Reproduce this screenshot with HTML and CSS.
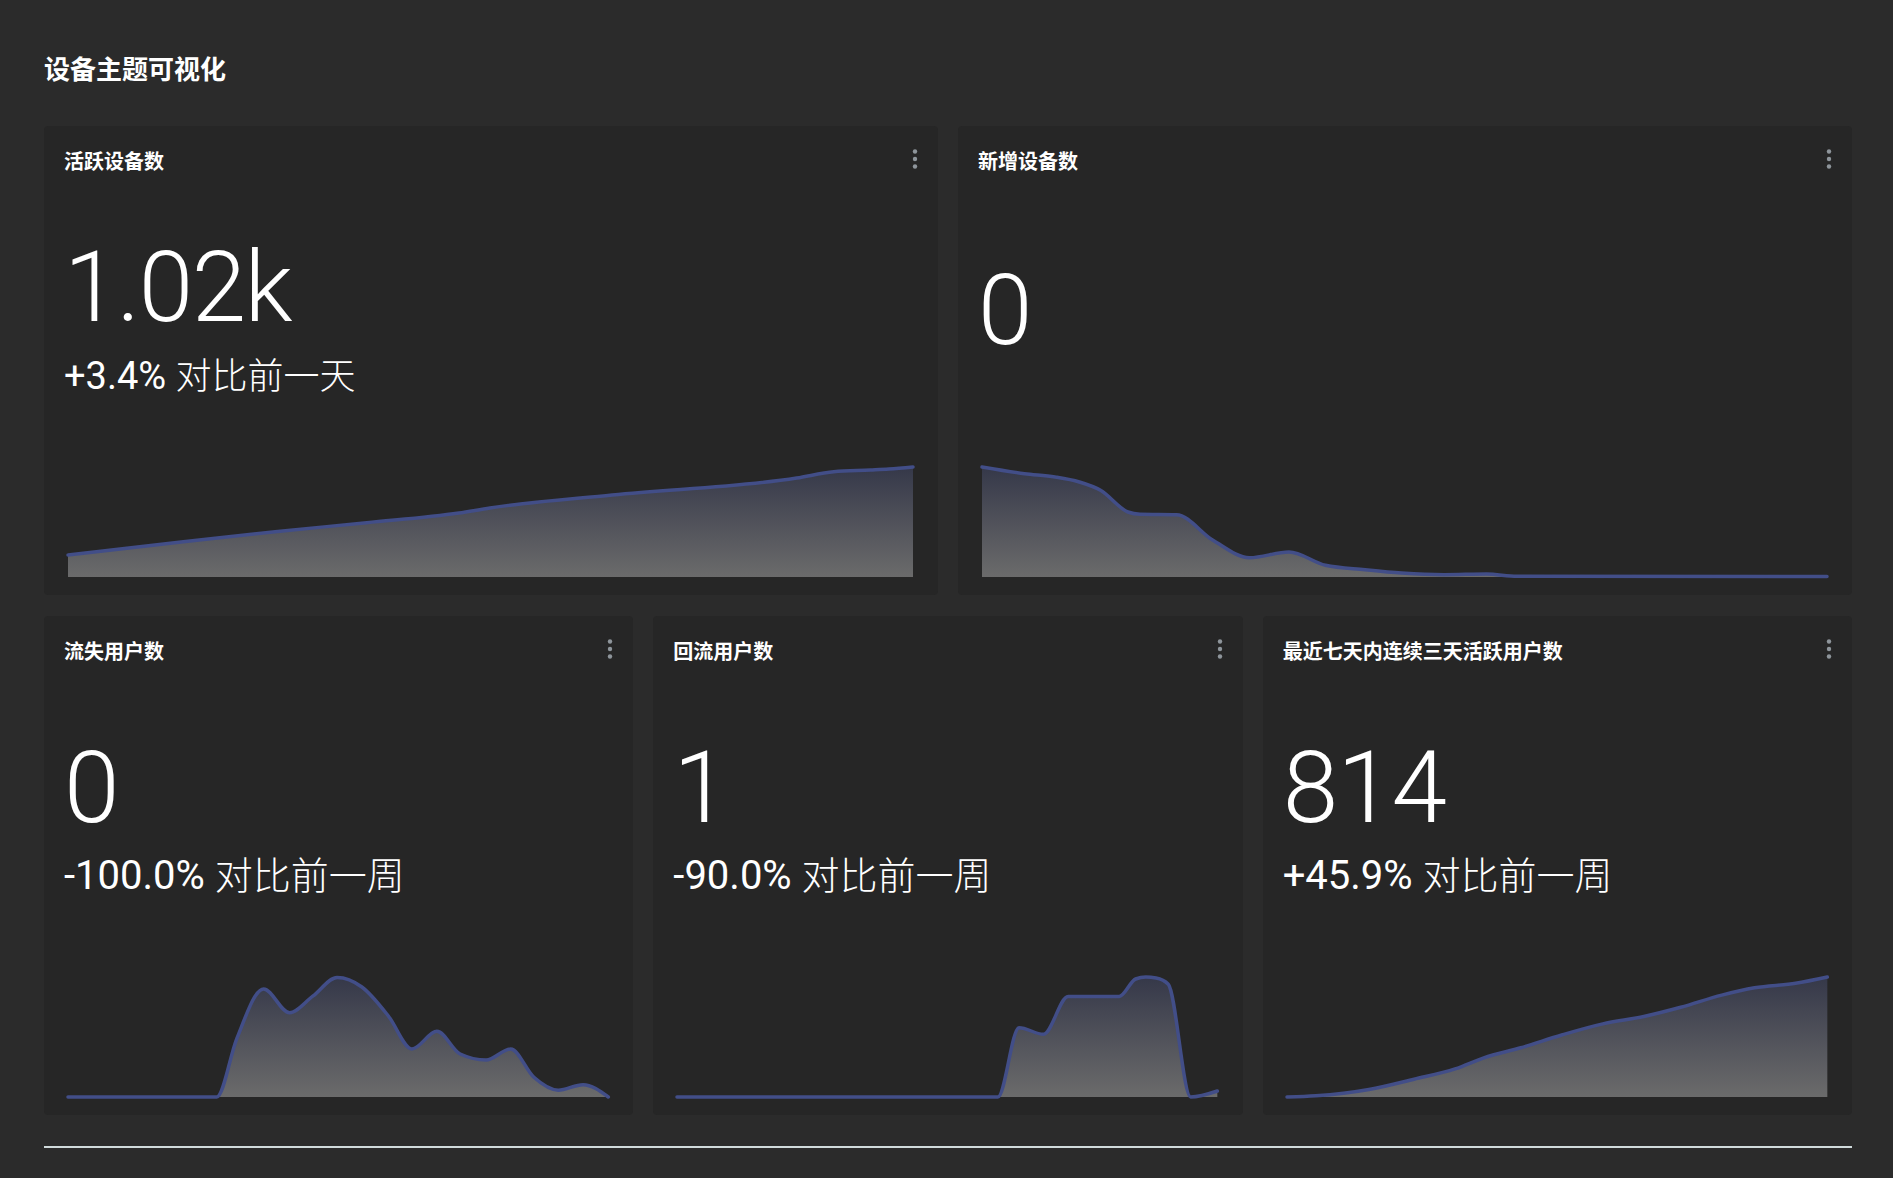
FILE: index.html
```html
<!DOCTYPE html>
<html lang="zh-CN">
<head>
<meta charset="utf-8">
<title>设备主题可视化</title>
<link rel="stylesheet" href="styles.css">
</head>
<body>
<main class="page">
  <h1 class="page-title">设备主题可视化</h1>
  <div class="dashboard">
    <section class="row row-top">
      <article class="card">
        <header class="card-head">
          <h2 class="card-title">活跃设备数</h2>
          <svg class="kebab" width="6" height="20" viewBox="0 0 6 20"><circle cx="3" cy="2.5" r="2.2"/><circle cx="3" cy="10" r="2.2"/><circle cx="3" cy="17.5" r="2.2"/></svg>
        </header>
        <div class="card-body">
          <div class="stat-value">1.02k</div>
          <div class="stat-delta">+3.4% <span class="delta-label">对比前一天</span></div>
        </div>
        <div class="spark-wrap spark-short">
          <svg class="spark" data-points="0,88 115,74.7 206.6,64.7 298,55.7 390,46 421,41 543,28 727,11 764,4.7 800.5,3 819,2 843,0"></svg>
        </div>
      </article>
      <article class="card">
        <header class="card-head">
          <h2 class="card-title">新增设备数</h2>
          <svg class="kebab" width="6" height="20" viewBox="0 0 6 20"><circle cx="3" cy="2.5" r="2.2"/><circle cx="3" cy="10" r="2.2"/><circle cx="3" cy="17.5" r="2.2"/></svg>
        </header>
        <div class="card-body">
          <div class="stat-value">0</div>
        </div>
        <div class="spark-wrap spark-short">
          <svg class="spark" data-points="0,0 42.6,6.7 73,10 97.3,15 118.5,23.3 145.9,45 158,47.3 194.5,47.7 231,73.3 267.5,90.7 307,85 343.5,98.3 383,102.7 419.5,106 462,107.7 504.6,107 535,109.3 845,109.5"></svg>
        </div>
      </article>
    </section>
    <section class="row row-bottom">
      <article class="card">
        <header class="card-head">
          <h2 class="card-title">流失用户数</h2>
          <svg class="kebab" width="6" height="20" viewBox="0 0 6 20"><circle cx="3" cy="2.5" r="2.2"/><circle cx="3" cy="10" r="2.2"/><circle cx="3" cy="17.5" r="2.2"/></svg>
        </header>
        <div class="card-body">
          <div class="stat-value">0</div>
          <div class="stat-delta">-100.0% <span class="delta-label">对比前一周</span></div>
        </div>
        <div class="spark-wrap spark-tall">
          <svg class="spark" data-points="0,120 148.6,120 168.7,61.6 195.5,11.9 221.4,35.8 244.6,19.2 269,0.5 293.7,10 320.5,39.5 343.7,72 368.7,54.3 391.9,77 417.8,83 442.4,72 465.6,100.3 490,113.2 514.7,107.7 540,120"></svg>
        </div>
      </article>
      <article class="card">
        <header class="card-head">
          <h2 class="card-title">回流用户数</h2>
          <svg class="kebab" width="6" height="20" viewBox="0 0 6 20"><circle cx="3" cy="2.5" r="2.2"/><circle cx="3" cy="10" r="2.2"/><circle cx="3" cy="17.5" r="2.2"/></svg>
        </header>
        <div class="card-body">
          <div class="stat-value">1</div>
          <div class="stat-delta">-90.0% <span class="delta-label">对比前一周</span></div>
        </div>
        <div class="spark-wrap spark-tall">
          <svg class="spark" data-points="0,120 320.4,120 341.6,50.7 366,57.3 390.6,19.4 441.6,19.4 458,2 468.2,0 478.4,1 490.6,7.2 513,120 539.6,114"></svg>
        </div>
      </article>
      <article class="card">
        <header class="card-head">
          <h2 class="card-title">最近七天内连续三天活跃用户数</h2>
          <svg class="kebab" width="6" height="20" viewBox="0 0 6 20"><circle cx="3" cy="2.5" r="2.2"/><circle cx="3" cy="10" r="2.2"/><circle cx="3" cy="17.5" r="2.2"/></svg>
        </header>
        <div class="card-body">
          <div class="stat-value">814</div>
          <div class="stat-delta">+45.9% <span class="delta-label">对比前一周</span></div>
        </div>
        <div class="spark-wrap spark-tall">
          <svg class="spark" data-points="0,120 28.7,118.8 81.9,112.5 127,102.2 168,91.9 196.7,80.8 233.6,70.8 274.6,58 315.6,46.9 356.6,39.5 393.5,30.3 434.5,18.1 467.3,10.8 508.3,6.3 540,0"></svg>
        </div>
      </article>
    </section>
    <hr class="divider">
  </div>
</main>
<script src="script.js"></script>
</body>
</html>
```

FILE: styles.css
```css
* {
  box-sizing: border-box;
}

html,
body {
  margin: 0;
  padding: 0;
}

body {
  background: #2b2b2b;
  color: #ffffff;
  font-family: Roboto, "Noto Sans CJK SC", sans-serif;
}

.page {
  padding: 50px 41px 0 44px;
  min-height: 1178px;
}

.page-title {
  margin: 0;
  font-family: "Noto Sans CJK SC", sans-serif;
  font-size: 26px;
  line-height: 36px;
  font-weight: 700;
}

.dashboard {
  margin-top: 40px;
  display: flex;
  flex-direction: column;
  gap: 21px;
}

.row {
  display: grid;
  gap: 20px;
}

.row-top {
  grid-template-columns: 1fr 1fr;
  height: 469px;
}

.row-bottom {
  grid-template-columns: 1fr 1fr 1fr;
  height: 499px;
}

.card {
  background: #262626;
  border-radius: 4px;
  padding: 21px 20px 18px;
  display: flex;
  flex-direction: column;
  min-width: 0;
}

.card-head {
  display: flex;
  justify-content: space-between;
  align-items: center;
  height: 28px;
}

.card-title {
  margin: 0;
  font-family: "Noto Sans CJK SC", sans-serif;
  font-size: 20px;
  line-height: 28px;
  font-weight: 700;
  color: #ffffff;
}

.kebab {
  display: block;
  fill: #8e959b;
  margin-bottom: 5px;
}

.card-body {
  flex: 1;
  display: flex;
  flex-direction: column;
  justify-content: center;
  padding-bottom: 20px;
}

.stat-value {
  font-size: 100px;
  line-height: 120px;
  font-weight: 300;
  letter-spacing: -1px;
  white-space: nowrap;
}

.stat-delta {
  margin-top: 6px;
  font-size: 40px;
  line-height: 38px;
  font-weight: 400;
  white-space: nowrap;
}

.delta-label {
  font-family: "Noto Sans CJK SC", sans-serif;
  font-size: 38px;
  font-weight: 300;
}

.row-top .stat-value {
  font-size: 98px;
  letter-spacing: -1.5px;
}

.row-top .stat-delta {
  font-size: 38px;
}

.row-top .delta-label {
  font-size: 36px;
}

.spark-wrap {
  padding: 0 5px 0 4px;
}

.spark-short .spark {
  height: 110px;
}

.spark-tall .spark {
  height: 120px;
}

.spark {
  display: block;
  width: 100%;
  overflow: visible;
}

.spark-line {
  fill: none;
  stroke: #424e88;
  stroke-width: 3.5px;
  stroke-linecap: round;
  stroke-linejoin: round;
}

.spark-area {
  stroke: none;
}

.divider {
  margin: 10px 0 0;
  height: 2px;
  border: 0;
  background: #d0dadb;
}
```

FILE: script.js
```js
(function () {
  var NS = 'http://www.w3.org/2000/svg';

  function sign(x) { return x < 0 ? -1 : 1; }

  function slope3(p0, p1, p2) {
    var h0 = p1[0] - p0[0], h1 = p2[0] - p1[0];
    var s0 = (p1[1] - p0[1]) / h0, s1 = (p2[1] - p1[1]) / h1;
    var p = (s0 * h1 + s1 * h0) / (h0 + h1);
    return (sign(s0) + sign(s1)) * Math.min(Math.abs(s0), Math.abs(s1), 0.5 * Math.abs(p)) || 0;
  }

  function slope2(p0, p1, t) {
    var h = p1[0] - p0[0];
    return h ? (3 * (p1[1] - p0[1]) / h - t) / 2 : t;
  }

  function monotonePath(pts) {
    var n = pts.length, t = new Array(n), i;
    for (i = 1; i < n - 1; i++) t[i] = slope3(pts[i - 1], pts[i], pts[i + 1]);
    if (n > 2) {
      t[0] = slope2(pts[0], pts[1], t[1]);
      t[n - 1] = slope2(pts[n - 2], pts[n - 1], t[n - 2]);
    } else {
      t[0] = t[1] = (pts[1][1] - pts[0][1]) / (pts[1][0] - pts[0][0]);
    }
    var d = 'M' + pts[0][0] + ',' + pts[0][1];
    for (i = 0; i < n - 1; i++) {
      var a = pts[i], b = pts[i + 1], dx = (b[0] - a[0]) / 3;
      d += ' C' + (a[0] + dx) + ',' + (a[1] + dx * t[i]) + ' ' +
        (b[0] - dx) + ',' + (b[1] - dx * t[i + 1]) + ' ' + b[0] + ',' + b[1];
    }
    return d;
  }

  document.querySelectorAll('svg.spark').forEach(function (svg, idx) {
    var pts = svg.getAttribute('data-points').trim().split(/\s+/).map(function (s) {
      var a = s.split(',');
      return [parseFloat(a[0]), parseFloat(a[1])];
    });
    var w = pts[pts.length - 1][0];
    var maxY = 0;
    pts.forEach(function (p) { if (p[1] > maxY) maxY = p[1]; });
    var base = Math.max(maxY, svg.parentNode.classList.contains('spark-short') ? 110 : 120);
    svg.setAttribute('viewBox', '0 0 ' + w + ' ' + base);
    svg.setAttribute('preserveAspectRatio', 'none');

    var defs = document.createElementNS(NS, 'defs');
    var grad = document.createElementNS(NS, 'linearGradient');
    var gid = 'spark-grad-' + idx;
    grad.setAttribute('id', gid);
    grad.setAttribute('x1', '0'); grad.setAttribute('y1', '0');
    grad.setAttribute('x2', '0'); grad.setAttribute('y2', '1');
    var s1 = document.createElementNS(NS, 'stop');
    s1.setAttribute('offset', '0'); s1.setAttribute('stop-color', '#353849');
    var s2 = document.createElementNS(NS, 'stop');
    s2.setAttribute('offset', '1'); s2.setAttribute('stop-color', '#6b6b6b');
    grad.appendChild(s1); grad.appendChild(s2);
    defs.appendChild(grad);
    svg.appendChild(defs);

    var line = monotonePath(pts);
    var area = document.createElementNS(NS, 'path');
    area.setAttribute('class', 'spark-area');
    area.setAttribute('d', line + ' L' + w + ',' + base + ' L' + pts[0][0] + ',' + base + ' Z');
    area.setAttribute('fill', 'url(#' + gid + ')');
    svg.appendChild(area);

    var path = document.createElementNS(NS, 'path');
    path.setAttribute('class', 'spark-line');
    path.setAttribute('d', line);
    path.setAttribute('vector-effect', 'non-scaling-stroke');
    svg.appendChild(path);
  });
})();
```
